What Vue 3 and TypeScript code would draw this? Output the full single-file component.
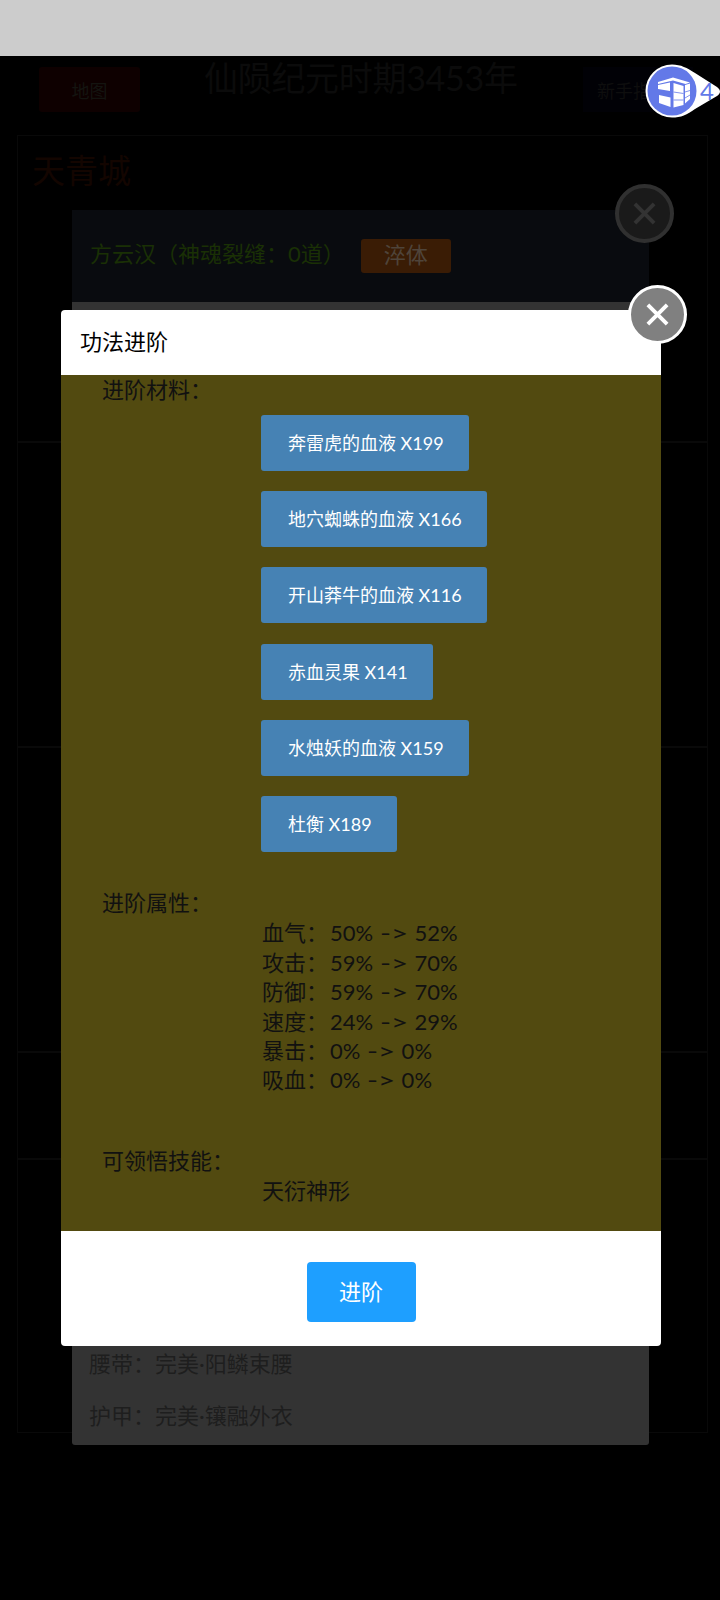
<template>
  <div class="screen">
    <div class="status-bar"></div>

    <div class="page">
      <div class="page-head">
        <button class="map-btn" type="button">地图</button>
        <div class="era">仙陨纪元时期3453年</div>
        <button class="guide-btn" type="button">新手指南</button>
      </div>
      <div class="frame">
        <div class="frame-row city-row"><span class="city">天青城</span></div>
        <div class="frame-row row-b"></div>
        <div class="frame-row row-c"></div>
        <div class="frame-row row-d"></div>
      </div>
    </div>

    <div class="under-modal">
      <div class="under-head">
        <span class="under-name">方云汉（神魂裂缝：0道）</span>
        <span class="under-btn">淬体</span>
      </div>
      <div class="under-body">
        <div v-for="row in equipRows" :key="row" class="under-row">{{ row }}</div>
      </div>
    </div>
    <div class="close-btn close-dim">
      <svg viewBox="0 0 24 24" width="33" height="33"><path d="M5 5 19 19M19 5 5 19" /></svg>
    </div>

    <div class="dialog">
      <div class="dialog-title">功法进阶</div>
      <div class="dialog-body">
        <div class="label">进阶材料：</div>
        <div class="materials">
          <button v-for="item in materials" :key="item" class="material-btn" type="button">{{ item }}</button>
        </div>
        <div class="label attr-label">进阶属性：</div>
        <div class="values">
          <div v-for="attr in attrs" :key="attr.name">
            <span class="attr-name">{{ attr.name }}：</span>{{ attr.from }} <span class="arrow">-&gt;</span> {{ attr.to }}
          </div>
        </div>
        <div class="label skill-label">可领悟技能：</div>
        <div class="values">天衍神形</div>
      </div>
      <div class="dialog-foot">
        <button class="primary-btn" type="button">进阶</button>
      </div>
    </div>
    <div class="close-btn close-top">
      <svg viewBox="0 0 24 24" width="33" height="33"><path d="M5 5 19 19M19 5 5 19" /></svg>
    </div>

    <div class="float-badge">
      <svg class="badge-shape" viewBox="0 0 84 62" width="84" height="62">
        <path d="M31 4.5C40 4.5 46 8 54 13L76 27C80 30 80 33 76 36L54 49C46 55 40 57.5 31 57.5A26.5 26.5 0 0 1 31 4.5Z" fill="#fff" />
        <circle cx="31" cy="31" r="24.5" fill="#6379e8" />
        <g transform="translate(0 -2)">
          <path fill="#fff" d="M17 24 32 19.5 49 24.5 44.5 26 32 22.5 17 26ZM17 27 29 24.5 29 33 17 31ZM32.5 25 42.5 28 42.5 47 32.5 49.5ZM44 27 49 25.5 49 41 44 45.5ZM18 37 29.5 39.5 29.5 49 18 45Z" />
          <path fill="none" stroke="#6379e8" stroke-width="0.8" d="M32.5 34 42.5 35.5M32.5 42 42.5 42M44 34 49 32.5M44 40 49 37" />
        </g>
      </svg>
      <span class="badge-num">4</span>
    </div>
  </div>
</template>

<script setup lang="ts">
const equipRows: string[] = ['腰带：完美·阳鳞束腰', '护甲：完美·镶融外衣']

const materials: string[] = [
  '奔雷虎的血液 X199',
  '地穴蜘蛛的血液 X166',
  '开山莽牛的血液 X116',
  '赤血灵果 X141',
  '水烛妖的血液 X159',
  '杜衡 X189',
]

const attrs = [
  { name: '血气', from: '50%', to: '52%' },
  { name: '攻击', from: '59%', to: '70%' },
  { name: '防御', from: '59%', to: '70%' },
  { name: '速度', from: '24%', to: '29%' },
  { name: '暴击', from: '0%', to: '0%' },
  { name: '吸血', from: '0%', to: '0%' },
]
</script>

<style>
html,
body {
  background: #000;
}
</style>

<style scoped>
.screen {
  position: relative;
  width: 720px;
  height: 1600px;
  overflow: hidden;
  background: #000;
  font-family: Lato, "Noto Sans CJK SC", sans-serif;
}

.status-bar {
  height: 56px;
  background: #cccccc;
}

.page {
  padding: 11px 12px 0 17px;
}

.page-head {
  height: 68px;
  display: flex;
  align-items: flex-start;
}

.map-btn {
  width: 101px;
  height: 45px;
  margin-left: 22px;
  border: none;
  border-radius: 3px;
  background: #0e0000;
  color: #141410;
  font: inherit;
  font-size: 18px;
}

.era {
  margin-left: 64px;
  margin-top: -8px;
  width: 331px;
  color: #0b0b0b;
  font-size: 34px;
  letter-spacing: -0.3px;
  line-height: 38px;
  white-space: nowrap;
}

.guide-btn {
  flex-shrink: 0;
  margin-left: 48px;
  width: 110px;
  height: 45px;
  padding: 0 0 0 14px;
  border: none;
  background: #010106;
  color: #0e0e0e;
  font: inherit;
  font-size: 18px;
  white-space: nowrap;
  text-align: left;
}

.frame {
  height: 1296px;
  border: 1px solid #090909;
}

.frame-row {
  box-sizing: border-box;
  border-bottom: 2px solid #090909;
}

.city-row {
  height: 307px;
  padding: 12px 0 0 14px;
}

.city {
  color: #130500;
  font-size: 33px;
  line-height: 44px;
}

.row-b {
  height: 305px;
}

.row-c {
  height: 305px;
}

.row-d {
  height: 107px;
}

.under-modal {
  position: absolute;
  left: 72px;
  top: 210px;
  width: 577px;
  height: 1235px;
  border-radius: 0 0 3px 3px;
  overflow: hidden;
  background: #333333;
}

.under-head {
  height: 92px;
  display: flex;
  align-items: center;
  gap: 16px;
  padding-left: 18px;
  background: #090b0f;
  color: #1a3005;
  font-size: 22px;
  white-space: nowrap;
}

.under-name {
  padding-bottom: 8px;
}

.under-btn {
  width: 90px;
  height: 34px;
  border-radius: 3px;
  background: #3a1c05;
  color: #4f443a;
  text-align: center;
  line-height: 31px;
}

.under-body {
  height: 1143px;
  box-sizing: border-box;
  display: flex;
  flex-direction: column;
  justify-content: flex-end;
  padding: 0 0 3px 17px;
}

.under-row {
  height: 52px;
  line-height: 52px;
  color: #1e1e1e;
  font-size: 22px;
}

.close-btn {
  position: absolute;
  width: 59px;
  height: 59px;
  box-sizing: border-box;
  border-radius: 50%;
  display: flex;
  align-items: center;
  justify-content: center;
}

.close-btn path {
  fill: none;
  stroke-width: 2.8;
}

.close-dim {
  left: 615px;
  top: 184px;
  border: 4px solid #303030;
  background: #1a1a1a;
}

.close-dim path {
  stroke: #333;
}

.close-top {
  left: 628px;
  top: 285px;
  border: 3px solid #fff;
  background: #808080;
}

.close-top path {
  stroke: #fff;
}

.dialog {
  position: absolute;
  left: 61px;
  top: 310px;
  width: 600px;
  height: 1036px;
  display: flex;
  flex-direction: column;
  border-radius: 4px;
  overflow: hidden;
  background: #fff;
}

.dialog-title {
  height: 65px;
  padding-left: 19px;
  color: #000;
  font-size: 22px;
  line-height: 63px;
}

.dialog-body {
  height: 856px;
  box-sizing: border-box;
  padding-left: 41px;
  background: #524a10;
  color: #111;
  font-size: 22px;
}

.label {
  height: 30px;
  line-height: 30px;
}

.materials {
  display: flex;
  flex-direction: column;
  align-items: flex-start;
  gap: 20.4px;
  margin: 9.5px 0 0 159px;
}

.material-btn {
  height: 56px;
  padding: 0 25px 2px 27px;
  border: none;
  border-radius: 3px;
  background: #4682b4;
  color: #fff;
  font: inherit;
  font-size: 18px;
  white-space: nowrap;
}

.attr-label {
  margin-top: 36px;
}

.values {
  margin-left: 160px;
  line-height: 29.4px;
}

.attr-name {
  margin-right: 2px;
}

.arrow {
  display: inline-block;
  margin: 0 8px 0 1px;
  transform: scaleX(1.35);
  transform-origin: left center;
}

.skill-label {
  margin-top: 51px;
}

.dialog-foot {
  flex: 1;
  display: flex;
  justify-content: center;
  padding-top: 31px;
}

.primary-btn {
  width: 109px;
  height: 60px;
  padding: 0 0 4px;
  border: none;
  border-radius: 4px;
  background: #1e9fff;
  color: #fff;
  font: inherit;
  font-size: 22px;
}

.float-badge {
  position: absolute;
  left: 641px;
  top: 60px;
  width: 84px;
  height: 62px;
}

.badge-shape {
  display: block;
}

.badge-num {
  position: absolute;
  left: 59px;
  top: 14px;
  color: #6379e8;
  font-size: 24px;
  line-height: 34px;
}
</style>
